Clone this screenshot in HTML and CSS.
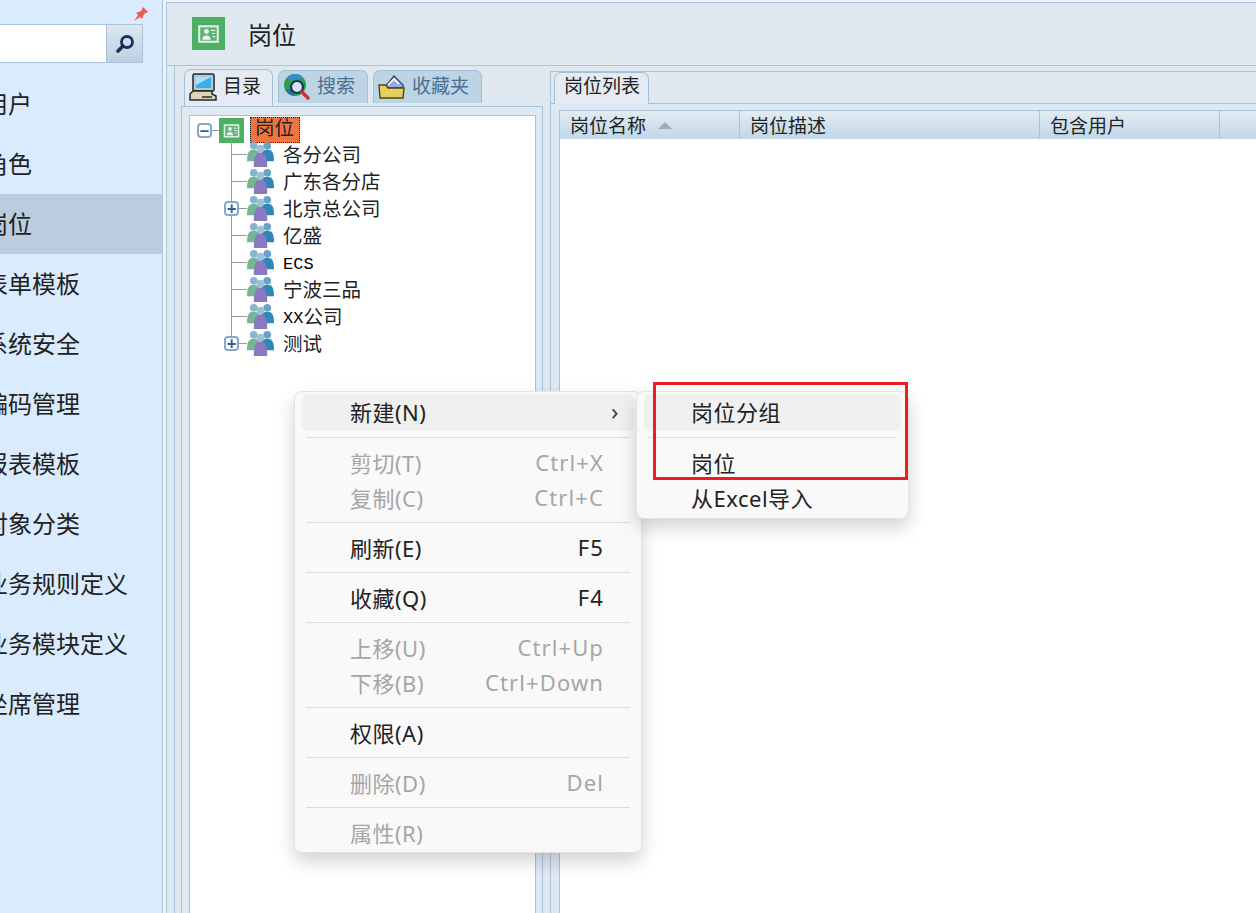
FILE: index.html
```html
<!doctype html>
<html lang="zh-CN">

<head>
    <meta charset="UTF-8">
    <title>岗位</title>
    <link rel="stylesheet" href="styles.css">
</head>

<body>
    <svg class="icon-defs">
        <symbol id="i-post" viewBox="0 0 32 32">
            <rect width="32" height="32" fill="#4caf64" />
            <rect x="6" y="8" width="20" height="17" fill="#dff2e3" />
            <rect x="8" y="10" width="16" height="13" fill="#5cb574" />
            <circle cx="14" cy="14" r="2.4" fill="#eef8f0" />
            <path d="M10 22c0-3 1.500-4 4-4s4 1 4 4z" fill="#eef8f0" />
            <path d="M18.500 13h4M19.500 16h3M20 19h2.500" stroke="#eef8f0" stroke-width="1.200" />
        </symbol>
        <symbol id="i-group" viewBox="0 0 28 28">
            <circle cx="7" cy="5" r="4" fill="#86b5d0" />
            <circle cx="21" cy="5" r="4" fill="#6aa3c9" />
            <path d="M0 21c0-9 2-12 7-12s7 3 7 12z" fill="#74b596" />
            <path d="M14 21c0-9 2-12 7-12s7 3 7 12z" fill="#2f86b8" />
            <circle cx="14" cy="8" r="4" fill="#9cc0d6" />
            <path d="M7 27c0-10 2-15 7-15s7 5 7 15z" fill="#8a78c0" />
        </symbol>
        <symbol id="i-computer" viewBox="0 0 28 28">
            <rect x="4" y="1" width="21" height="17" rx="1.500" fill="#b9c7d2" stroke="#1c2a33" stroke-width="1.500" />
            <rect x="7" y="4" width="15" height="11" fill="#39aee6" />
            <path d="M7 4h15l-15 8z" fill="#a8e2f9" />
            <path d="M1 21l3-3h19v3l4 2v4H1z" fill="#ddd6b6" stroke="#1c2a33" stroke-width="1.500" />
            <path d="M13 24h10" stroke="#555" stroke-width="2" />
        </symbol>
        <symbol id="i-search" viewBox="0 0 28 28">
            <circle cx="12" cy="12" r="11" fill="#2f9c52" />
            <path d="M4 5c5-5 11-5 15-2l-2 4c-3-2-6-1-9 1z" fill="#3a8dc9" />
            <path d="M2 16c2 4 5 6 9 7l-1-5z" fill="#1f6fb0" />
            <circle cx="14" cy="14" r="6" fill="#d5e3ec" stroke="#1d3554" stroke-width="2.200" />
            <path d="M19 19l6 6" stroke="#c7352d" stroke-width="3.400" stroke-linecap="round" />
        </symbol>
        <symbol id="i-folder" viewBox="0 0 28 28">
            <path d="M7 14l9-11 9 9v3H7z" fill="#8fb0e6" stroke="#3b4668" stroke-width="1.400" />
            <path d="M10 12l6-6 5 5" fill="none" stroke="#fff" stroke-width="1.600" />
            <path d="M1 12h7l2 3h16l-1 10H2z" fill="#e6cf5c" stroke="#4c4518" stroke-width="1.400" />
        </symbol>
    </svg>

    <div class="app">
        <aside class="sidebar">
            <div class="pin-row">
                <svg class="pin" viewBox="0 0 14 14">
                    <path d="M0 14l4-6-2-2 5-2 2-4 5 5-4 2-2 5-2-2z" fill="#ee5a5a" />
                </svg>
            </div>
            <div class="side-search">
                <div class="side-search__input"></div>
                <div class="side-search__btn">
                    <svg viewBox="0 0 22 22" width="22" height="22">
                        <circle cx="13" cy="9" r="5.500" fill="none" stroke="#1b2f5c" stroke-width="2.800" />
                        <path d="M9 13l-5 5" stroke="#1b2f5c" stroke-width="3.600" stroke-linecap="round" />
                    </svg>
                </div>
            </div>
            <ul class="side-list">
                <li class="side-item">用户</li>
                <li class="side-item">角色</li>
                <li class="side-item side-item--active">岗位</li>
                <li class="side-item">表单模板</li>
                <li class="side-item">系统安全</li>
                <li class="side-item">编码管理</li>
                <li class="side-item">报表模板</li>
                <li class="side-item">对象分类</li>
                <li class="side-item">业务规则定义</li>
                <li class="side-item">业务模块定义</li>
                <li class="side-item">坐席管理</li>
            </ul>
        </aside>

        <main class="main">
            <header class="main-head">
                <svg class="main-head__icon"><use href="#i-post" /></svg>
                <h1 class="main-head__title">岗位</h1>
            </header>

            <div class="workspace">
                <section class="nav-pane">
                    <div class="tabs">
                        <div class="tab tab--active">
                            <svg class="tab__icon"><use href="#i-computer" /></svg>目录
                        </div>
                        <div class="tab tab--search">
                            <svg class="tab__icon"><use href="#i-search" /></svg>搜索
                        </div>
                        <div class="tab tab--fav">
                            <svg class="tab__icon"><use href="#i-folder" /></svg>收藏夹
                        </div>
                    </div>
                    <div class="nav-body">
                        <div class="tree">
                            <div class="tree-root">
                                <span class="toggle toggle--root">&minus;</span>
                                <span class="tree-root__link"></span>
                                <svg class="tree-root__icon"><use href="#i-post" /></svg>
                                <span class="tree-root__label">岗位</span>
                            </div>
                            <ul class="tree-children">
                                <li class="node"><i class="twig"></i><svg class="node__icon"><use href="#i-group" /></svg>各分公司</li>
                                <li class="node"><i class="twig"></i><svg class="node__icon"><use href="#i-group" /></svg>广东各分店</li>
                                <li class="node"><i class="twig"></i><span class="toggle toggle--child">+</span><svg class="node__icon"><use href="#i-group" /></svg>北京总公司</li>
                                <li class="node"><i class="twig"></i><svg class="node__icon"><use href="#i-group" /></svg>亿盛</li>
                                <li class="node"><i class="twig"></i><svg class="node__icon"><use href="#i-group" /></svg><span class="latin">ECS</span></li>
                                <li class="node"><i class="twig"></i><svg class="node__icon"><use href="#i-group" /></svg>宁波三品</li>
                                <li class="node"><i class="twig"></i><svg class="node__icon"><use href="#i-group" /></svg><span class="latin">XX</span>公司</li>
                                <li class="node"><i class="twig"></i><span class="toggle toggle--child">+</span><svg class="node__icon"><use href="#i-group" /></svg>测试</li>
                            </ul>
                        </div>
                    </div>
                </section>

                <section class="list-pane">
                    <div class="list-tabs">
                        <div class="list-tab">岗位列表</div>
                    </div>
                    <div class="grid">
                        <div class="grid-head">
                            <div class="col col--name">岗位名称<i class="sort"></i></div>
                            <div class="col col--desc">岗位描述</div>
                            <div class="col col--users">包含用户</div>
                            <div class="col col--rest"></div>
                        </div>
                    </div>
                </section>
            </div>
        </main>
    </div>

    <div class="menu menu--main">
        <div class="menu-item menu-item--hover">新建(N)<span class="menu-item__arrow">&rsaquo;</span></div>
        <div class="menu-sep"></div>
        <div class="menu-item menu-item--off">剪切(T)<span class="menu-item__key">Ctrl+X</span></div>
        <div class="menu-item menu-item--off">复制(C)<span class="menu-item__key">Ctrl+C</span></div>
        <div class="menu-sep"></div>
        <div class="menu-item">刷新(E)<span class="menu-item__key">F5</span></div>
        <div class="menu-sep"></div>
        <div class="menu-item">收藏(Q)<span class="menu-item__key">F4</span></div>
        <div class="menu-sep"></div>
        <div class="menu-item menu-item--off">上移(U)<span class="menu-item__key">Ctrl+Up</span></div>
        <div class="menu-item menu-item--off">下移(B)<span class="menu-item__key">Ctrl+Down</span></div>
        <div class="menu-sep"></div>
        <div class="menu-item">权限(A)</div>
        <div class="menu-sep"></div>
        <div class="menu-item menu-item--off">删除(D)<span class="menu-item__key">Del</span></div>
        <div class="menu-sep"></div>
        <div class="menu-item menu-item--off">属性(R)</div>
    </div>

    <div class="menu menu--sub">
        <div class="menu-item menu-item--hover">岗位分组</div>
        <div class="menu-sep"></div>
        <div class="menu-item">岗位</div>
        <div class="menu-item">从Excel导入</div>
    </div>

    <div class="callout"></div>
</body>

</html>
```

FILE: styles.css
```css
* {
    box-sizing: border-box;
}

html,
body {
    margin: 0;
    height: 913px;
    overflow: hidden;
}

body {
    position: relative;
    background: #edf3f9;
    color: #222;
    font-family: "Noto Sans", "Noto Sans CJK SC", sans-serif;
}

ul {
    margin: 0;
    padding: 0;
    list-style: none;
}

.icon-defs {
    display: none;
}

.app {
    display: flex;
    height: 913px;
}

/* left menu, its text is cut by the window edge */
.sidebar {
    width: 163px;
    flex: none;
    overflow: hidden;
    background: #d9ebfd;
    border-right: 1px solid #a9c3da;
}

.pin-row {
    display: flex;
    justify-content: flex-end;
    height: 24px;
    padding: 7px 14px 0 0;
}

.pin {
    width: 14px;
    height: 14px;
}

.side-search {
    display: flex;
    height: 39px;
    margin: 0 19px 11px -2px;
    border: 1px solid #a9c3da;
}

.side-search__input {
    flex: 1;
    background: #fff;
}

.side-search__btn {
    display: flex;
    align-items: center;
    justify-content: center;
    width: 36px;
    background: linear-gradient(#dde7f0, #bdd0e0);
    border-left: 1px solid #a9c3da;
}

.side-item {
    height: 60px;
    text-indent: -16px;
    line-height: 59px;
    font-size: 24px;
    white-space: nowrap;
}

.side-item--active {
    background: #bacddf;
}

/* right side */
.main {
    flex: 1;
    display: flex;
    flex-direction: column;
    margin-left: 3px;
    margin-top: 2px;
    background: #e0e8f0;
    border-left: 1px solid #a9c3da;
    border-top: 1px solid #a9c3da;
}

.main-head {
    display: flex;
    align-items: center;
    flex: none;
    height: 62px;
    padding: 0 0 1px 25px;
}

.main-head__icon {
    width: 33px;
    height: 33px;
}

.main-head__title {
    margin: 0 0 0 23px;
    font-size: 24px;
    font-weight: 400;
}

.workspace {
    flex: 1;
    display: flex;
    min-height: 0;
    padding-left: 7px;
    border-top: 1px solid #a9c3da;
}

/* tree pane */
.nav-pane {
    width: 369px;
    flex: none;
    display: flex;
    flex-direction: column;
    border-left: 1px solid #a9c3da;
}

.tabs {
    display: flex;
    gap: 5px;
    flex: none;
    height: 40px;
    padding: 4px 0 0 9px;
}

.tab {
    display: flex;
    align-items: center;
    height: 33px;
    padding: 0 0 5px 4px;
    font-size: 19px;
    color: #4b7094;
    background: #bdd4e5;
    border: 1px solid #a2c0d9;
    border-bottom: 0;
    border-radius: 7px 7px 0 0;
}

.tab--active {
    width: 89px;
    height: 37px;
    position: relative;
    z-index: 1;
    color: #222;
    background: #e4ebf2;
    border-bottom: 0;
    margin-top: -1px;
    padding-bottom: 7px;
}

.tab--search {
    width: 90px;
}

.tab--fav {
    width: 109px;
}

.tab__icon {
    width: 28px;
    height: 28px;
    flex: none;
    margin: 5px 6px 0 0;
}

.nav-body {
    flex: 1;
    margin-left: 6px;
    padding: 8px 6px 0 7px;
    border-left: 1px solid #a9c3da;
    border-top: 1px solid #a9c3da;
    border-right: 1px solid #a9c3da;
}

.tree {
    height: 100%;
    position: relative;
    background: #fff;
    border-left: 1px solid #a9c3da;
    border-right: 1px solid #a9c3da;
    border-top: 1px solid #a9c3da;
    font-size: 19.5px;
    padding-top: 1px;
}

.tree-root {
    display: flex;
    align-items: center;
    height: 26px;
}

.toggle {
    display: flex;
    align-items: center;
    justify-content: center;
    width: 15px;
    height: 15px;
    background: #fff;
    color: #2f5f94;
    font-size: 17px;
    font-weight: 700;
    line-height: 1;
    border: 2px solid #86a9cb;
    border-radius: 4px;
}

.toggle--root {
    margin-left: 7px;
}

.toggle--child {
    position: absolute;
    left: 34px;
    top: 7px;
}

.tree-root__link {
    width: 7px;
    height: 1px;
    background: #9a9a9a;
}

.tree-root__icon {
    width: 25px;
    height: 25px;
}

.tree-root__label {
    margin-left: 6px;
    padding: 0 4px;
    height: 26px;
    width: 50px;
    line-height: 20px;
    background: #f1733f;
    border: 1px dotted #222;
}

.tree-children {
    position: relative;
    margin-top: -3px;
}

.tree-children::before {
    content: "";
    position: absolute;
    left: 41px;
    top: 0;
    bottom: 12px;
    width: 1px;
    background: #9a9a9a;
}

.node {
    position: relative;
    display: flex;
    align-items: center;
    height: 27px;
}

.twig {
    width: 16px;
    height: 1px;
    margin: 2px 0 0 41px;
    background: #9a9a9a;
}

.node__icon {
    width: 27px;
    height: 27px;
    margin: 2px 9px 0 0;
}

.latin {
    margin-top: 5px;
    font-family: "Liberation Mono", monospace;
    font-size: 17px;
    color: #000;
}

/* list pane */
.list-pane {
    flex: 1;
    display: flex;
    flex-direction: column;
    min-width: 0;
    margin-left: 7px;
    margin-top: 5px;
    border-left: 1px solid #a9c3da;
    border-top: 1px solid #a9c3da;
}

.list-tabs {
    display: flex;
    flex: none;
    height: 32px;
    padding-left: 3px;
    border-bottom: 1px solid #a2c0d9;
}

.list-tab {
    width: 95px;
    height: 32px;
    padding-left: 9px;
    line-height: 26px;
    font-size: 19px;
    background: #e4ebf2;
    border: 1px solid #a2c0d9;
    border-bottom: 0;
    border-radius: 7px 7px 0 0;
}

.grid {
    flex: 1;
    margin: 6px 0 0 8px;
    background: #fff;
    border-left: 1px solid #a9c3da;
}

.grid-head {
    display: flex;
    height: 29px;
    background: linear-gradient(#e2ecf4, #c1d7e7);
    border-top: 1px solid #a9c3da;
    font-size: 19px;
}

.col {
    display: flex;
    align-items: center;
    padding-left: 10px;
    border-right: 1px solid #a9c3da;
}

.col--name {
    width: 180px;
}

.col--desc {
    width: 300px;
}

.col--users {
    width: 180px;
}

.col--rest {
    flex: 1;
    border-right: 0;
}

.sort {
    width: 0;
    height: 0;
    margin-left: 12px;
    border-left: 7px solid transparent;
    border-right: 7px solid transparent;
    border-bottom: 7px solid #a9a9a9;
}

/* context menus */
.menu {
    position: absolute;
    background: #f9f9f9;
    border: 1px solid #e3e3e3;
    border-radius: 8px;
    box-shadow: 0 8px 18px rgba(0, 0, 0, 0.18);
    font-size: 22px;
    letter-spacing: 0.5px;
    z-index: 5;
}

.menu--main {
    left: 294px;
    top: 391px;
    width: 348px;
    height: 462px;
    padding: 2px 7px 0 7px;
}

.menu--sub {
    left: 636px;
    top: 391px;
    width: 273px;
    height: 128px;
    padding: 2px 7px 0 7px;
    z-index: 6;
}

.menu-item {
    display: flex;
    justify-content: space-between;
    align-items: center;
    height: 35px;
    padding: 0 30px 4px 48px;
    white-space: nowrap;
}

.menu-item--hover {
    height: 37px;
    background: #f0f0f0;
    border-radius: 6px;
}

.menu--main .menu-item--hover {
    padding-right: 15px;
}

.menu--sub .menu-item {
    padding-left: 47px;
}

.menu-item--off {
    color: #a6a6a6;
}

.menu-item__key {
    letter-spacing: 1.1px;
}

.menu-item__arrow {
    color: #444;
    font-size: 24px;
    line-height: 1;
}

.menu-sep {
    height: 1px;
    margin: 6px 4px 8px 4px;
    background: #dcdcdc;
}

/* red box over the screenshot */
.callout {
    position: absolute;
    left: 653px;
    top: 382px;
    width: 255px;
    height: 98px;
    border: 3px solid #ee1c25;
    z-index: 7;
}
```
